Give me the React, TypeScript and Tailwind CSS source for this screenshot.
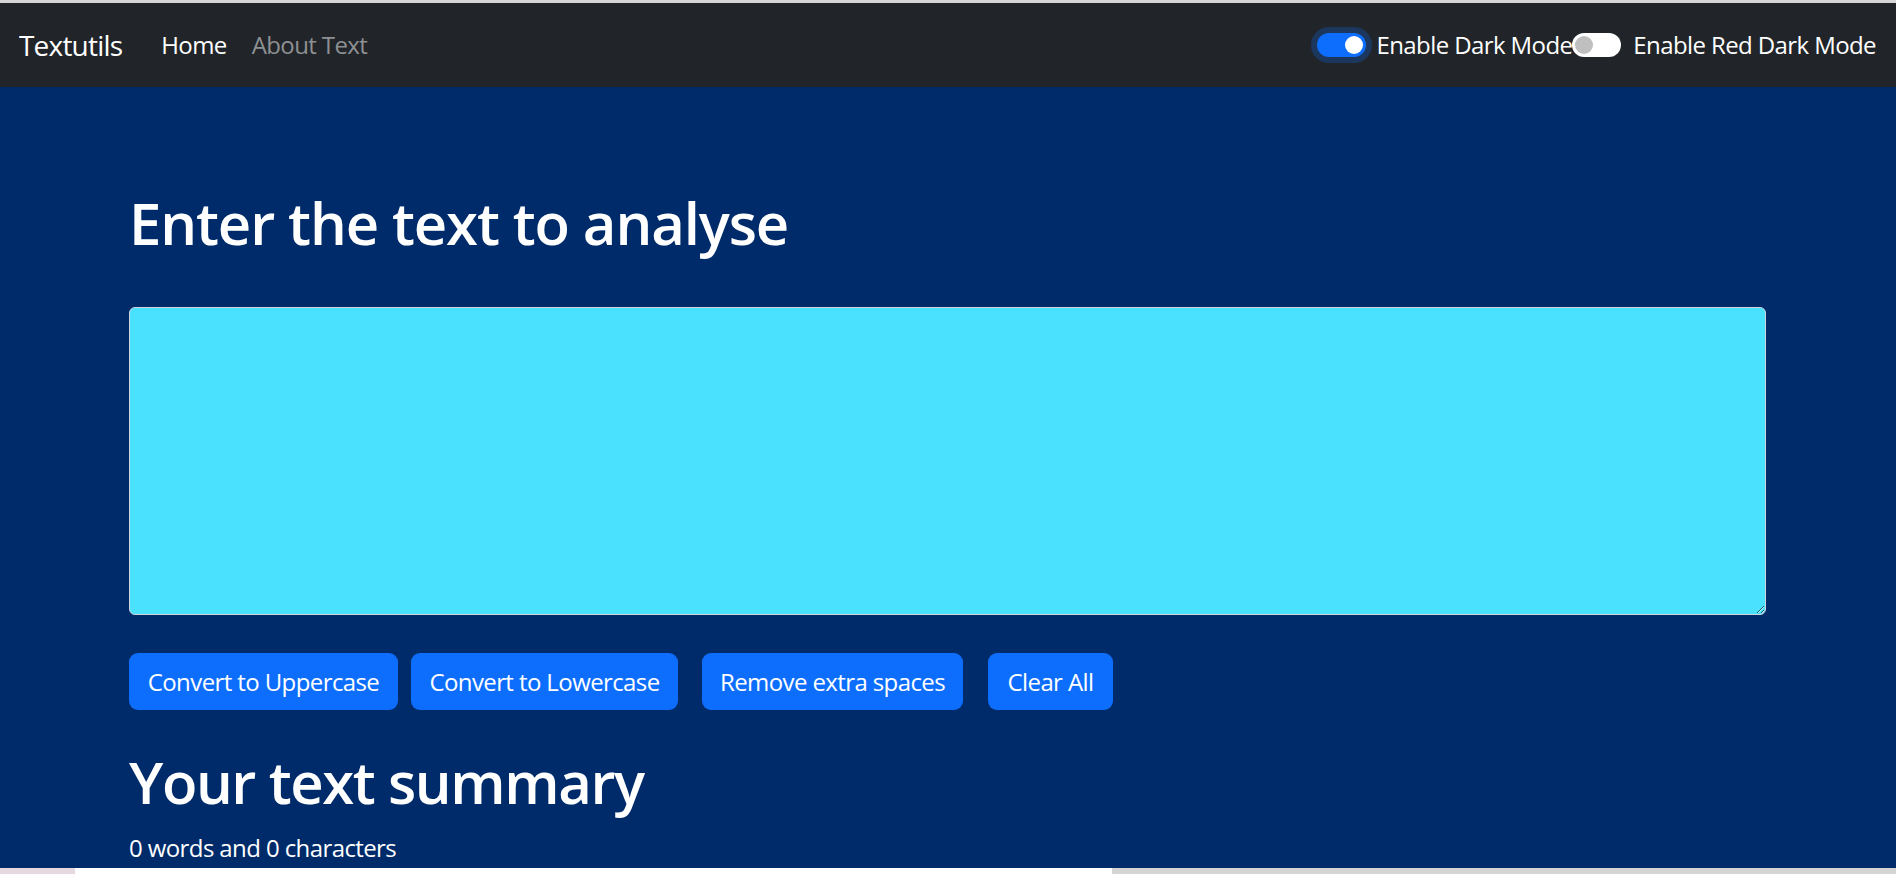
import { useState } from "react";

export default function App() {
  const [text, setText] = useState("");
  const [dark, setDark] = useState(true);
  const [red, setRed] = useState(false);

  const words = text.split(/\s+/).filter((w) => w.length > 0).length;

  return (
    <div className="h-[874px] overflow-hidden flex flex-col bg-[#002b6a] font-['Open_Sans',sans-serif] tracking-[-0.6px]">
      <div className="h-[3px] bg-[#d6d6d6]" />

      {/* Navbar */}
      <nav className="h-[84px] bg-[#212529] flex items-center pl-[19px] pr-[20px]">
        <span className="text-[28px] tracking-[-0.8px] text-white mr-[39px]">Textutils</span>
        <a className="text-[24px] text-white mr-[25px]">Home</a>
        <a className="text-[24px] text-[#8e9093]">About Text</a>

        <div className="ml-auto flex items-center">
          <Switch checked={dark} focused onClick={() => setDark(!dark)} />
          <span className="text-[24px] text-white ml-[11px]">Enable Dark Mode</span>
          <Switch checked={red} onClick={() => setRed(!red)} />
          <span className="text-[24px] text-white ml-[12px]">Enable Red Dark Mode</span>
        </div>
      </nav>

      <main className="flex-1 px-[129px] pt-[100px] text-white">
        <h1 className="text-[58px] leading-[72px] font-semibold tracking-[-1.1px] mb-[48px]">Enter the text to analyse</h1>
        <textarea
          value={text}
          onChange={(e) => setText(e.target.value)}
          className="block w-[1637px] h-[308px] bg-[#4ae1ff] border border-[#ced4da] rounded-[6px] text-black text-[24px] px-[18px] py-[9px] outline-none"
        />

        {/* Buttons */}
        <div className="flex mt-[38px]">
          <Btn className="w-[269px]" onClick={() => setText(text.toUpperCase())}>Convert to Uppercase</Btn>
          <Btn className="w-[267px] ml-[13px]" onClick={() => setText(text.toLowerCase())}>Convert to Lowercase</Btn>
          <Btn className="w-[261px] ml-[24px]" onClick={() => setText(text.split(/[ ]+/).join(" "))}>Remove extra spaces</Btn>
          <Btn className="w-[125px] ml-[25px]" onClick={() => setText("")}>Clear All</Btn>
        </div>

        <h1 className="text-[58px] leading-[72px] font-semibold tracking-[-1.4px] mt-[36px] mb-[12px]">Your text summary</h1>
        <p className="text-[24px] leading-[36px]">
          {words} words and {text.length} characters
        </p>
      </main>

      {/* bottom strip */}
      <div className="h-[6px] flex">
        <div className="w-[75px] bg-[#e6d8e0]" />
        <div className="w-[1037px] bg-white" />
        <div className="flex-1 bg-[#d4d4d4]" />
      </div>
    </div>
  );
}

const Btn = ({ className, onClick, children }: { className: string, onClick: () => void, children: React.ReactNode }) => {
  return (
    <button
      onClick={onClick}
      className={`h-[57px] bg-[#0d6efd] text-white text-[24px] rounded-[9px] flex items-center justify-center cursor-pointer ${className}`}
    >
      {children}
    </button>
  );
};

const Switch = ({ checked, focused, onClick }: { checked: boolean, focused?: boolean, onClick: () => void }) => {
  return (
    <button
      onClick={onClick}
      className={`
        w-[49px] h-[24px] rounded-full flex items-center px-[3px] cursor-pointer
        ${checked ? "bg-[#0d6efd] justify-end" : "bg-white justify-start"}
        ${focused ? "shadow-[0_0_0_6px_rgba(13,110,253,0.25)]" : ""}
      `}
    >
      <span className={`w-[18px] h-[18px] rounded-full ${checked ? "bg-white" : "bg-[#bfbfbf]"}`} />
    </button>
  );
};
